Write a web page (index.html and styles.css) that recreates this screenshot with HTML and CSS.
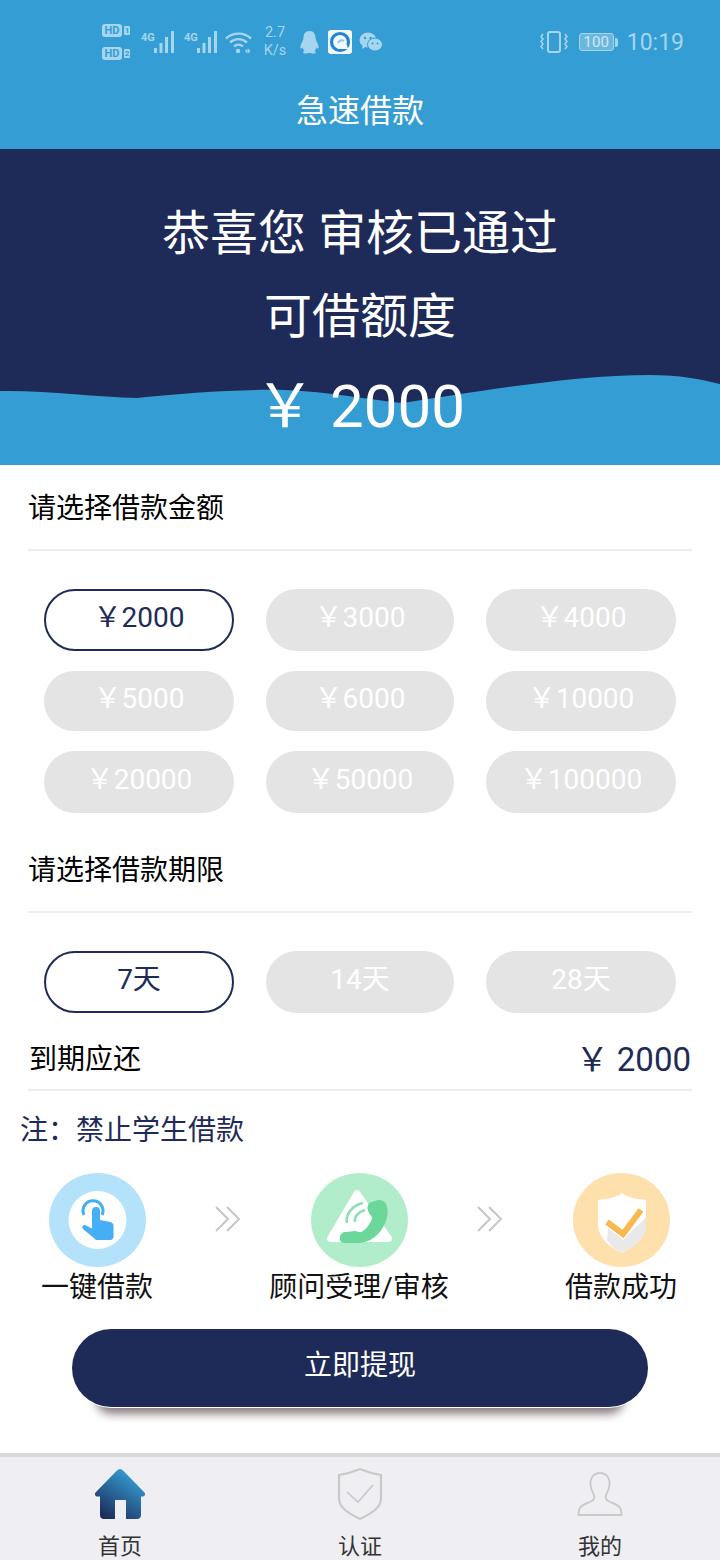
FILE: index.html
```html
<!DOCTYPE html>
<html lang="zh-CN">
<head>
<meta charset="utf-8">
<title>急速借款</title>
<link rel="stylesheet" href="styles.css">
</head>
<body>
<div class="page">
  <header class="header">
    <div class="status">
      <div class="hd-col">
        <div class="hd-row"><span class="hd">HD</span><span class="hd-n">1</span></div>
        <div class="hd-row"><span class="hd">HD</span><span class="hd-n">2</span></div>
      </div>
      <div class="net net-first">
        <span class="g4">4G</span>
        <svg class="bars" width="24" height="23" viewBox="0 0 24 23"><g fill="#a6d5f0"><rect x="1" y="17" width="3" height="5"/><rect x="6.500" y="12" width="3" height="10"/><rect x="12" y="6" width="3" height="16"/><rect x="18" y="0" width="3" height="22"/></g></svg>
      </div>
      <div class="net net-second">
        <span class="g4">4G</span>
        <svg class="bars" width="24" height="23" viewBox="0 0 24 23"><g fill="#a6d5f0"><rect x="1" y="17" width="3" height="5"/><rect x="6.500" y="12" width="3" height="10"/><rect x="12" y="6" width="3" height="16"/><rect x="18" y="0" width="3" height="22"/></g></svg>
      </div>
      <svg class="wifi" width="27" height="23" viewBox="0 0 27 23"><g fill="none" stroke="#a6d5f0" stroke-width="2.400"><path d="M1 7.500C8 1 19 1 26 7.500"/><path d="M5 11.500C10 7 17 7 22 11.500"/><path d="M9 15.500C11.500 13 15.500 13 18 15.500"/></g><circle cx="13" cy="20" r="2.200" fill="#a6d5f0"/><path d="M20 20l2.500-2.500v5zM23 17.500l2.500 2.500-2.500 2.500z" fill="#a6d5f0"/></svg>
      <div class="speed"><span>2.7</span><span>K/s</span></div>
      <svg class="qq" width="21" height="25" viewBox="0 0 21 25"><path d="M10.500 1C6 1 4.500 4.500 4.500 8c0 2-2 4.500-3 8-.6 2.500.5 3.500 2 1.500.4 1.500 1 2.500 2 3.500-2 .8-2 2.500 1 2.500 2 0 3-.5 4-.5s2 .5 4 .5c3 0 3-1.700 1-2.500 1-1 1.600-2 2-3.500 1.500 2 2.600 1 2-1.500-1-3.500-3-6-3-8 0-3.500-1.500-7-6-7z" fill="#a6d5f0"/></svg>
      <svg class="browser" width="24" height="24" viewBox="0 0 24 24"><rect width="24" height="24" rx="3" fill="#f2f8fd"/><circle cx="12" cy="12" r="8.500" fill="none" stroke="#1f86d6" stroke-width="3.200"/><path d="M9 17c2-4 6-5 10-2l1 4H10z" fill="#f2f8fd"/><path d="M10 13a4 4 0 0 1 6-2" fill="none" stroke="#8cc8f0" stroke-width="2"/></svg>
      <svg class="wechat" width="24" height="20" viewBox="0 0 24 20"><ellipse cx="9" cy="8" rx="8.500" ry="7.500" fill="#a6d5f0"/><path d="M4 12l-1 5 5-3z" fill="#a6d5f0"/><ellipse cx="16" cy="12.500" rx="7.500" ry="6.500" fill="#a6d5f0" stroke="#349dd3"/><circle cx="6" cy="6" r="1.200" fill="#349dd3"/><circle cx="11.500" cy="6" r="1.200" fill="#349dd3"/><circle cx="13.500" cy="11.500" r="1" fill="#349dd3"/><circle cx="18.500" cy="11.500" r="1" fill="#349dd3"/></svg>
      <div class="status-right">
        <svg class="vibrate" width="28" height="22" viewBox="0 0 28 22"><rect x="8" y="1" width="12" height="20" rx="2" fill="none" stroke="#a6d5f0" stroke-width="2"/><path d="M3 3l-2 2.500 2 2.500-2 2.500 2 2.500-2 2.500 2 2.500M25 3l2 2.500-2 2.500 2 2.500-2 2.500 2 2.500-2 2.500" fill="none" stroke="#a6d5f0" stroke-width="1.600"/></svg>
        <div class="battery"><div class="battery-box">100</div><span class="battery-tip"></span></div>
        <span class="time">10:19</span>
      </div>
    </div>
    <h1 class="title">急速借款</h1>
  </header>

  <section class="hero">
    <svg class="wave" width="720" height="90" viewBox="0 0 720 90"><path d="M0 16C45 15 95 22 137 23 185 18 240 14 285 15 330 17 365 24 402 28 470 18 570 0 650 0 680 0 700 4 720 9V90H0z" fill="#349dd3"/></svg>
    <p class="hero-line hero-first">恭喜您 审核已通过</p>
    <p class="hero-line hero-second">可借额度</p>
    <p class="hero-amount">￥ 2000</p>
  </section>

  <h2 class="sec-title sec-first">请选择借款金额</h2>
  <div class="opts opts-amount">
    <button class="opt opt-on">￥2000</button>
    <button class="opt">￥3000</button>
    <button class="opt">￥4000</button>
    <button class="opt">￥5000</button>
    <button class="opt">￥6000</button>
    <button class="opt">￥10000</button>
    <button class="opt">￥20000</button>
    <button class="opt">￥50000</button>
    <button class="opt">￥100000</button>
  </div>

  <h2 class="sec-title sec-second">请选择借款期限</h2>
  <div class="opts opts-term">
    <button class="opt opt-on">7天</button>
    <button class="opt">14天</button>
    <button class="opt">28天</button>
  </div>

  <div class="due"><span>到期应还</span><span class="due-amount">￥ 2000</span></div>
  <p class="note">注：禁止学生借款</p>

  <div class="steps">
    <div class="step">
      <svg class="step-icon" width="97" height="94" viewBox="0 0 97 94"><ellipse cx="48.500" cy="47" rx="48.500" ry="47" fill="#b5e2fb"/><circle cx="48.500" cy="47" r="29" fill="#fff"/><path d="M35 42a10 10 0 1 1 18 0" fill="none" stroke="#45aef5" stroke-width="3"/><path d="M43 38a4 4 0 0 1 8 0V47l10 2c2 .4 3.500 1.500 3.500 3.500V64c0 1.500-1.500 3-3 3H48c-1 0-2-.5-2.500-1.500L34 56c-2-2 .5-5 3-3.500l6 3z" fill="#45aef5"/></svg>
      <span class="step-label">一键借款</span>
    </div>
    <svg class="arrow" width="68" height="30" viewBox="0 0 68 30"><path d="M22 3l12 12-12 12M33 3l12 12-12 12" fill="none" stroke="#c6c6c6" stroke-width="2"/></svg>
    <div class="step">
      <svg class="step-icon" width="97" height="94" viewBox="0 0 97 94"><ellipse cx="48.500" cy="47" rx="48.500" ry="47" fill="#b1edcb"/><path d="M46 17c1 0 2 .5 3 2l31 44c2 3 1 6-3 6H20c-4 0-5-3-3-6l26-44c1-1.500 2-2 3-2z" fill="#fff"/><path d="M64 28c4-2 9-1 11 3 3 6 2 16-4 25-6 9-15 14-24 14H34c-4 0-6-3-5-6 0-3 3-5 6-5l9-1c3 0 4 2 6 1 5-2 10-9 11-14 0-2-2-3-3-5-2-3-2-7 0-10z" fill="#6bd79b"/><g fill="none" stroke="#8fe0b5" stroke-width="2.600"><path d="M36 50c-2-9 6-18 16-20"/><path d="M44 49c-1-5 3-10 10-12"/></g></svg>
      <span class="step-label">顾问受理/审核</span>
    </div>
    <svg class="arrow" width="68" height="30" viewBox="0 0 68 30"><path d="M22 3l12 12-12 12M33 3l12 12-12 12" fill="none" stroke="#c6c6c6" stroke-width="2"/></svg>
    <div class="step">
      <svg class="step-icon" width="97" height="94" viewBox="0 0 97 94"><ellipse cx="48.500" cy="47" rx="48.500" ry="47" fill="#fde0ab"/><path d="M49 20c5 4 13 6 24 7v24c0 14-13 24-24 29-11-5-24-15-24-29V27c11-1 19-3 24-7z" fill="#fff"/><path d="M35 55l15 12 23-23v7c0 14-13 24-24 29-7-3-12-8-15-13z" fill="#e9e9e9"/><path d="M34 49l16 12 18-24" fill="none" stroke="#f8b94e" stroke-width="6"/></svg>
      <span class="step-label">借款成功</span>
    </div>
  </div>

  <button class="cta">立即提现</button>

  <nav class="tabs">
    <div class="tab tab-on">
      <svg class="tab-icon" width="52" height="52" viewBox="0 0 52 52"><defs><linearGradient id="house" x1="0.800" y1="0.100" x2="0.200" y2="1"><stop offset="0" stop-color="#359fd6"/><stop offset="1" stop-color="#1c2a58"/></linearGradient></defs><path d="M26 1c1 0 2 .5 3 1.500L50 24c2 2 1 4.500-1.500 4.500H47V47c0 2.500-1.500 4-4 4H32V32H21v19H10c-2.500 0-4-1.500-4-4V28.500H3.500C1 28.500 0 26 2 24L23 2.500C24 1.500 25 1 26 1z" fill="url(#house)"/></svg>
      <span>首页</span>
    </div>
    <div class="tab">
      <svg class="tab-icon" width="46" height="52" viewBox="0 0 46 52"><path d="M2 7c7-1 14-3 21-6 7 3 14 5 21 6v24c0 9-11 15-21 20C13 46 2 40 2 31z" fill="none" stroke="#c9c9c9" stroke-width="2.200" stroke-linejoin="round"/><path d="M10 24l11 10 15-17" fill="none" stroke="#c9c9c9" stroke-width="1.600"/></svg>
      <span>认证</span>
    </div>
    <div class="tab">
      <svg class="tab-icon" width="46" height="52" viewBox="0 0 46 52"><path d="M23 5c-8 0-10 7-9.500 12 .3 4 2 7 3.500 10 1 3 0 5-3 6.500-5 2-11 3.500-12 8.500-.3 1.500-.5 3-.5 5h43c0-2-.2-3.500-.5-5-1-5-7-6.500-12-8.500-3-1.500-4-3.500-3-6.500 1.500-3 3.200-6 3.500-10 .5-5-1.500-12-9.500-12z" fill="none" stroke="#c9c9c9" stroke-width="1.800"/></svg>
      <span>我的</span>
    </div>
  </nav>
</div>
</body>
</html>
```
FILE: styles.css
```css
* { box-sizing: border-box; }
html, body { margin: 0; padding: 0; }
body { background: #fff; font-family: Roboto, "Noto Sans CJK SC", sans-serif; color: #000; }
p, h1, h2 { margin: 0; font-weight: 400; }
button { font-family: inherit; border: 0; padding: 0; }
.page { width: 720px; height: 1560px; overflow: hidden; display: flex; flex-direction: column; }
.page > * { flex-shrink: 0; }

.header { height: 149px; background: #349dd3; color: #fff; }
.status { height: 84px; display: flex; align-items: center; padding: 0 36px 0 102px; color: #a6d5f0; }
.hd-col { display: flex; flex-direction: column; gap: 10px; width: 32px; margin-top: -1px; }
.hd-row { display: flex; align-items: center; gap: 2px; }
.hd { width: 20px; height: 13px; border-radius: 3px; background: #a6d5f0; color: #349dd3; font-size: 11px; line-height: 13px; font-weight: 700; text-align: center; }
.hd-n { width: 6px; height: 9px; border-radius: 1px; background: #a6d5f0; color: #349dd3; font-size: 8px; line-height: 9px; font-weight: 700; text-align: center; }
.net { display: flex; align-items: flex-start; height: 23px; margin-top: 0; }
.net-first { margin-left: 7px; }
.net-second { margin-left: 7px; }
.g4 { width: 12px; font-size: 11px; line-height: 14px; font-weight: 700; white-space: nowrap; }
.bars { display: block; margin-left: 0; }
.wifi { margin-left: 5px; margin-top: 0; }
.speed { display: flex; flex-direction: column; align-items: center; width: 24px; margin-left: 11px; font-size: 14.500px; line-height: 18px; }
.qq { margin-left: 12px; }
.browser { margin-left: 8px; }
.wechat { margin-left: 7px; }
.status-right { margin-left: auto; display: flex; align-items: center; }
.vibrate { display: block; }
.battery { display: flex; align-items: center; gap: 1px; margin-left: 11px; }
.battery-box { width: 35px; height: 18px; border: 1px solid #a6d5f0; border-radius: 3px; background: #6cb7e0; font-size: 15px; line-height: 16px; text-align: center; color: #cfe9f8; }
.battery-tip { width: 3px; height: 9px; background: #a6d5f0; border-radius: 0 2px 2px 0; }
.time { margin-left: 9px; font-size: 23px; line-height: 30px; color: #a6d5f0; padding-top: 2px; }
.title { height: 65px; font-size: 32px; line-height: 54px; text-align: center; color: #fff; }

.hero { position: relative; height: 316px; background: #1e2b58; color: #fff; text-align: center; }
.wave { position: absolute; left: 0; bottom: 0; height: 90px; display: block; }
.hero-line, .hero-amount { position: relative; }
.hero-first { padding-top: 55px; font-size: 48px; line-height: 60px; }
.hero-second { padding-top: 23px; font-size: 48px; line-height: 60px; }
.hero-amount { padding-top: 26px; font-size: 60px; line-height: 68px; }

.sec-title { margin: 0 28px; height: 86px; font-size: 28px; line-height: 88px; border-bottom: 2px solid #eeeeee; color: #000; }
.sec-second { margin-top: 14px; }

.opts { display: grid; grid-template-columns: 190px 188px 190px; column-gap: 32px; row-gap: 20px; margin: 38px 0 0 44px; }
.opts-amount { grid-template-rows: 62px 60px 62px; }
.opts-term { grid-template-rows: 62px; }
.opt { border-radius: 31px; background: #e4e4e4; color: #fff; font-size: 28px; text-align: center; padding-bottom: 11px; }
.opt-on { background: #fff; border: 2px solid #1e2b58; color: #1e2b58; }

.due { margin: 14px 28px 0; padding: 0 0 2px 1px; height: 64px; display: flex; justify-content: space-between; align-items: center; font-size: 28px; border-bottom: 2px solid #eeeeee; color: #000; }
.due-amount { font-size: 33px; color: #1e2b58; margin-right: 1px; }
.note { margin: 20px 0 0 20px; font-size: 28px; line-height: 40px; color: #1e2b58; }

.steps { display: flex; margin-top: 22px; align-items: flex-start; }
.step { width: 194px; flex: none; display: flex; flex-direction: column; align-items: center; }
.step-icon { display: block; }
.step-label { font-size: 28px; line-height: 40px; white-space: nowrap; color: #111; margin-top: 1px; }
.arrow { flex: none; margin-top: 31px; display: block; }

.cta { display: block; margin: 21px 0 0 72px; width: 576px; height: 78px; border-radius: 39px; background: #1e2b58; color: #fff; font-size: 28px; padding-bottom: 11px; box-shadow: 0 1px 0 0 #fff, 0 31px 10px -24px #8a7c7e; }

.tabs { margin-top: 46px; height: 107px; display: grid; grid-template-columns: repeat(3, 240px); background: #eeeef3; border-top: 4px solid #d9d9d9; }
.tab { display: flex; flex-direction: column; align-items: center; padding-top: 11px; font-size: 22px; line-height: 30px; color: #333; }
.tab-icon { display: block; }
.tab span { margin-top: 12px; }
```
